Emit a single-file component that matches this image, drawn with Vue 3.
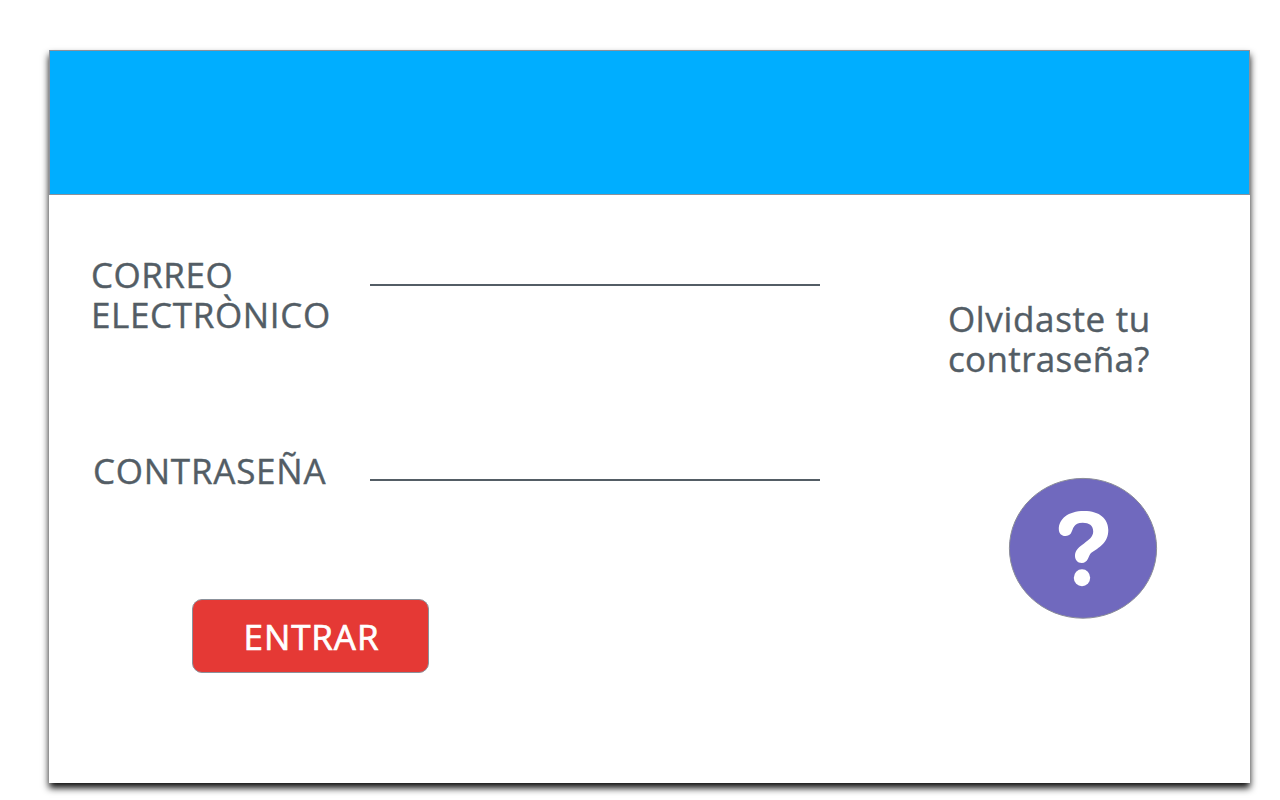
<script setup>
import { ref } from 'vue'

const email = ref('')
const password = ref('')
</script>

<template>
  <div class="page">
    <main class="window">
      <header class="banner"></header>
      <div class="content">
        <form class="login" @submit.prevent>
          <label class="field email">
            <span class="caption"><span class="line correo">CORREO</span><span class="line electronico">ELECTRÒNICO</span></span>
            <input v-model="email" type="text" />
          </label>
          <label class="field password">
            <span class="caption"><span class="line contrasena">CONTRASEÑA</span></span>
            <input v-model="password" type="password" />
          </label>
          <button class="submit" type="submit">ENTRAR</button>
        </form>
        <aside class="help">
          <div class="question"><span class="line olvidaste">Olvidaste tu</span><span class="line reset">contraseña?</span></div>
          <svg class="help-icon" width="150" height="142" viewBox="0 0 150 142">
            <ellipse cx="75" cy="71.3" rx="73.6" ry="69.9" fill="#7069be" stroke="#8b8d98" />
            <path d="M50.8 52C50.8 42 60 34 76 34C92 34 100.3 42 100.3 53C100.3 66 91 70.5 83 76C80.3 79 80 86 73.8 86C69.3 86 67 82.5 67 79C67 67.5 85.2 65 85.2 54.5C85.2 48.5 81 45.8 74.8 45.8C65 45.8 65.5 52 62.8 56.5C60.3 60.5 50.8 60.3 50.8 52Z" fill="#fff" />
            <ellipse cx="74" cy="100.7" rx="8.2" ry="8.5" fill="#fff" />
          </svg>
        </aside>
      </div>
    </main>
  </div>
</template>

<style>
body {
  background: #fff;
}
</style>

<style scoped>
.page {
  box-sizing: border-box;
  height: 800px;
  padding: 50px 0 0 49px;
  overflow: hidden;
}
.window {
  width: 1201px;
  height: 733px;
  background: #fff;
  box-shadow: 0 5px 7px rgba(0, 0, 0, 0.95);
  font-family: "Open Sans", "Noto Sans", sans-serif;
  font-size: 35px;
  line-height: 40px;
  color: #535d65;
  -webkit-text-stroke: 0.4px currentColor;
}
.banner {
  box-sizing: border-box;
  height: 145px;
  background: #00aeff;
  border: 1px solid #8b919b;
}
.content {
  display: flex;
}
.login {
  width: 771px;
  padding: 59px 0 0 42px;
  box-sizing: border-box;
}
.field {
  display: flex;
}
.caption {
  box-sizing: border-box;
  width: 279px;
  padding-top: 1px;
}
.line {
  display: block;
  white-space: nowrap;
}
input {
  box-sizing: border-box;
  width: 450px;
  height: 32px;
  padding: 0;
  border: 0;
  border-bottom: 2px solid #535d65;
  background: transparent;
  outline: none;
  font: inherit;
}
.password {
  margin-top: 115px;
}
.password input {
  height: 31px;
}
.password .caption {
  padding-left: 2px;
}
.correo { letter-spacing: 0.5px; }
.electronico { letter-spacing: 0.65px; }
.contrasena { letter-spacing: 0.75px; }
.submit {
  display: block;
  box-sizing: border-box;
  width: 237px;
  height: 74px;
  margin: 108px 0 0 101px;
  padding: 2px 0 0 2px;
  border: 1px solid #8b919b;
  border-radius: 10px;
  background: #e53935;
  color: #fff;
  font: inherit;
  letter-spacing: 0.9px;
  -webkit-text-stroke: 0.7px #fff;
}
.help {
  padding: 104px 0 0 128px;
}
.olvidaste { letter-spacing: 0.65px; }
.reset { letter-spacing: 0.35px; }
.help-icon {
  display: block;
  margin: 98px 0 0 60px;
}
</style>
